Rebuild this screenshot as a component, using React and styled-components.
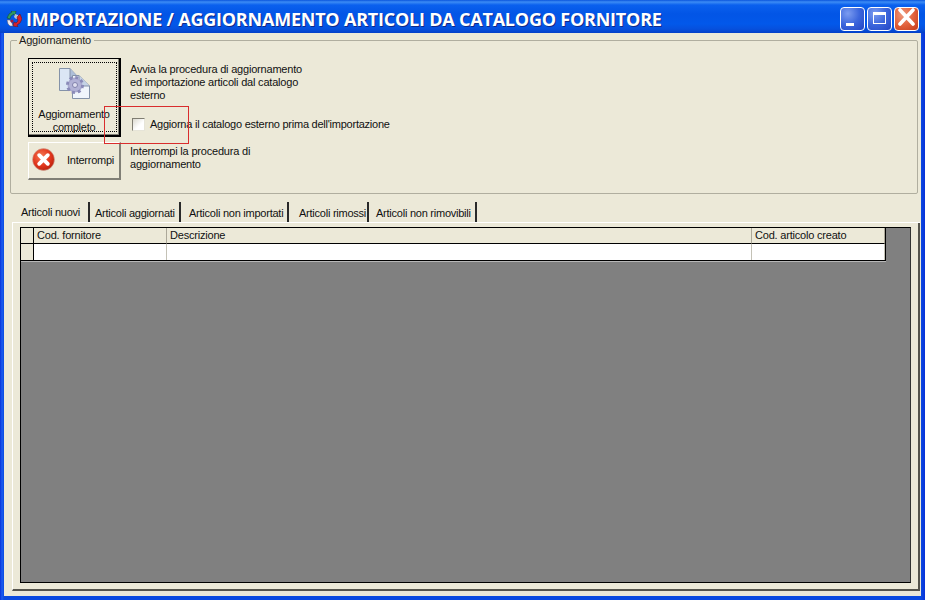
import React from "react";
import styled, { createGlobalStyle } from "styled-components";

const GlobalStyle = createGlobalStyle`
  html, body {
    margin: 0;
    padding: 0;
    background: #0a3ad6;
  }
  * {
    box-sizing: border-box;
  }
`;

const Win = styled.div`
  width: 925px;
  height: 600px;
  display: flex;
  flex-direction: column;
  overflow: hidden;
  background: linear-gradient(90deg, #0831d9 0, #1a5cf0 2px, #0a4ae0 4px, #0a4ae0 921px, #0831d9 100%);
  font-family: "Liberation Sans", Arial, sans-serif;
  font-size: 11px;
  letter-spacing: -0.2px;
  color: #111;
`;

const TitleBar = styled.div`
  height: 33px;
  flex: none;
  display: flex;
  align-items: center;
  padding: 0 6px 0 6px;
  background: linear-gradient(180deg, #0a55dc 0, #3c8cf5 2px, #0a60ee 5px, #0255e6 14px, #0258ea 24px, #0650dd 29px, #0340c8 33px);
`;

const Title = styled.div`
  flex: 1;
  margin-left: 4px;
  margin-top: 5px;
  color: #fff;
  font-family: "Open Sans", sans-serif;
  font-size: 18px;
  font-weight: 700;
  letter-spacing: -0.22px;
  white-space: nowrap;
  text-shadow: 1px 1px 0 #0f2a8a;
`;

const WinButton = styled.div`
  width: 25px;
  height: 24px;
  margin-left: 2px;
  margin-top: 5px;
  border: 1px solid #fff;
  border-radius: 4px;
  display: flex;
  background: ${(p) =>
    p.$close
      ? "radial-gradient(circle at 35% 30%, #ee9a7e 0, #e2623c 50%, #c3391a 100%)"
      : "radial-gradient(circle at 30% 25%, #7c9cf0 0, #3c66dc 50%, #2345c4 100%)"};
`;

const Client = styled.div`
  flex: 1;
  min-height: 0;
  margin: 0 4px 4px;
  padding: 1px 1px 5px 6px;
  background: #ece9d8;
  display: flex;
  flex-direction: column;
  position: relative;
`;

const Group = styled.fieldset`
  margin: 0 2px 0 0;
  padding: 0 0 0 17px;
  height: 160px;
  flex: none;
  border: 1px solid #b0ae9f;
  border-radius: 2px;
  display: flex;
  flex-direction: column;
`;

const Legend = styled.legend`
  margin-left: -11px;
  padding: 0 3px 0 2px;
  font-size: 11px;
  line-height: 13px;
  color: #1a1a1a;
`;

const ActionRow = styled.div`
  display: flex;
  margin-top: ${(p) => p.$top}px;
`;

const ActionButton = styled.div`
  width: 93px;
  height: ${(p) => p.$height}px;
  flex: none;
  background: #ece9d8;
  display: flex;
  align-items: center;
  position: relative;
  border-style: solid;
  border-width: 1px 2px 2px 1px;
  border-color: #fff #807f76 #807f76 #fff;
`;

const FocusButton = styled(ActionButton)`
  flex-direction: column;
  padding-top: 9px;
  border-color: #000;
  box-shadow: inset -1px -1px 0 #807f76;
`;

const FocusRing = styled.div`
  position: absolute;
  inset: 3px 2px 3px 3px;
  border: 1px dotted #000;
`;

const BigCaption = styled.div`
  text-align: center;
  line-height: 13px;
  margin-top: 8px;
  letter-spacing: -0.25px;
  white-space: nowrap;
`;

const StopSlot = styled.span`
  display: flex;
  margin: -3px 0 0 3px;
`;

const StopCaption = styled.span`
  margin: -1px 0 0 12px;
  letter-spacing: -0.25px;
`;

const Side = styled.div`
  margin-left: 9px;
  padding-top: ${(p) => p.$top}px;
  display: flex;
  flex-direction: column;
  line-height: 13px;
`;

const CheckRow = styled.label`
  display: flex;
  align-items: center;
  margin: 16px 0 0 2px;
  height: 13px;
  letter-spacing: -0.24px;
`;

const CheckBox = styled.span`
  width: 13px;
  height: 13px;
  margin-right: 5px;
  background: linear-gradient(135deg, #dcdad0, #fff 60%);
  border-style: solid;
  border-width: 1px;
  border-color: #7f7d72 #e6e4d8 #e6e4d8 #7f7d72;
`;

const RedFrame = styled.div`
  position: absolute;
  left: 100px;
  top: 73px;
  width: 85px;
  height: 38px;
  border: 1px solid #d92d2d;
`;

const Tabs = styled.div`
  margin: 8px 0 0 2px;
  padding-left: 3px;
  height: 21px;
  flex: none;
  display: flex;
  border-bottom: 1px solid #fff;
`;

const Tab = styled.div`
  width: ${(p) => p.$w}px;
  height: 20px;
  padding: ${(p) => (p.$active ? 4 : 5)}px 0 0 ${(p) => p.$pad}px;
  border-right: 2px solid #2a2a2a;
  white-space: nowrap;
  line-height: 13px;
  letter-spacing: -0.24px;
`;

const Pane = styled.div`
  flex: 1;
  min-height: 0;
  margin-left: 2px;
  padding: 4px 7px 6px 7px;
  border-right: 2px solid #55544c;
  border-bottom: 2px solid #55544c;
  border-left: 1px solid #fff;
  display: flex;
  flex-direction: column;
`;

const GridArea = styled.div`
  flex: 1;
  background: #808080;
  border: 1px solid #000;
  border-right-color: #333;
`;

const Table = styled.div`
  width: 865px;
  display: grid;
  grid-template-columns: 13px 133px 585px 133px;
  grid-template-rows: 16px 16px;
  background: #fff;
  border-right: 1px solid #000;
  border-bottom: 1px solid #000;
  box-shadow: 0 1px 0 #b8b8b8;
`;

const HeadCell = styled.div`
  background: #ece9d8;
  border-right: 1px solid #aca899;
  border-bottom: 1px solid #000;
  padding-left: 3px;
  line-height: 15px;
  white-space: nowrap;
`;

const Indicator = styled.div`
  background: #ece9d8;
  border-right: 1px solid #000;
  border-bottom: ${(p) => (p.$head ? "1px solid #000" : "none")};
`;

const BodyCell = styled.div`
  border-right: 1px solid #c4c2b6;
`;

const AppIcon = () => (
  <svg width="16" height="16" viewBox="0 0 16 16" style={{ marginTop: 4 }}>
    <path d="M1 7 L3 3 L6 1 L5 0 L10 0 L9 5 L8 3 L5 5 L4 8 Z" fill="#2f9a62" stroke="#14402c" strokeWidth="0.5" />
    <path d="M9 3 L12 4 L13 7 L10 8 L8 6 Z" fill="#b8c4d8" />
    <path d="M11 6 L14 3 L16 8 L14 12 L11 14 L12 16 L7 15 L8 11 L10 12 L12 10 Z" fill="#d8202c" stroke="#5c1018" strokeWidth="0.5" />
    <path d="M1 9 L4 9 L6 12 L7 15 L4 15 L2 13 Z" fill="#eeeaf2" stroke="#50506a" strokeWidth="0.5" />
    <circle cx="6" cy="10" r="1.6" fill="#a01d3c" />
  </svg>
);

const DocsIcon = () => (
  <svg width="31" height="32" viewBox="0 0 31 32" style={{ flex: "none" }}>
    <path d="M0.5 0.5 H11 L20 10 V22.5 H0.5 Z" fill="#dbe6f5" stroke="#8492a8" />
    <path d="M11 0.5 V10 H20" fill="#aebfd8" stroke="#8492a8" />
    <path d="M13.5 7.5 H20 L30.5 18 V30.5 H13.5 Z" fill="#f0f5fc" stroke="#8492a8" />
    <path d="M20 7.5 V18 H30.5" fill="#c4d2e6" stroke="#8492a8" />
    <circle cx="16" cy="17" r="7.5" fill="#a9a9cf" stroke="#8a8ab8" strokeWidth="3" strokeDasharray="3 2.9" />
    <circle cx="16" cy="17" r="6" fill="#b2b2d6" />
    <circle cx="16" cy="17" r="2.5" fill="#dfdff0" stroke="#8282ac" />
  </svg>
);

const StopIcon = () => (
  <svg width="23" height="23" viewBox="0 0 24 24">
    <defs>
      <radialGradient id="stop" cx="40%" cy="35%" r="70%">
        <stop offset="0" stopColor="#f47a55" />
        <stop offset="0.6" stopColor="#e2371d" />
        <stop offset="1" stopColor="#b81f0c" />
      </radialGradient>
    </defs>
    <circle cx="12" cy="12" r="11.4" fill="url(#stop)" stroke="#c9a898" strokeWidth="0.6" />
    <path d="M7.5 7.5 L16.5 16.5 M16.5 7.5 L7.5 16.5" stroke="#fff" strokeWidth="4" strokeLinecap="round" />
  </svg>
);

const tabs = [
  { label: "Articoli nuovi", w: 75, pad: 6, active: true },
  { label: "Articoli aggiornati", w: 91, pad: 5 },
  { label: "Articoli non importati", w: 108, pad: 8 },
  { label: "Articoli rimossi", w: 80, pad: 10 },
  { label: "Articoli non rimovibili", w: 108, pad: 7 },
];

export default function App() {
  return (
    <Win>
      <GlobalStyle />
      <TitleBar>
        <AppIcon />
        <Title>IMPORTAZIONE / AGGIORNAMENTO ARTICOLI DA CATALOGO FORNITORE</Title>
        <WinButton>
          <svg width="23" height="22" viewBox="0 0 23 22">
            <rect x="5" y="15" width="8" height="3" fill="#fff" />
          </svg>
        </WinButton>
        <WinButton>
          <svg width="23" height="22" viewBox="0 0 23 22">
            <path d="M5 4 H18 V16 H5 Z M6 7 V15 H17 V7 Z" fill="#fff" fillRule="evenodd" />
          </svg>
        </WinButton>
        <WinButton $close>
          <svg width="23" height="22" viewBox="0 0 23 22">
            <path d="M5 2 L18 16 M18 2 L5 16" stroke="#fff" strokeWidth="3.6" strokeLinecap="round" />
          </svg>
        </WinButton>
      </TitleBar>
      <Client>
        <Group>
          <Legend>Aggiornamento</Legend>
          <ActionRow $top={11}>
            <FocusButton $height={79}>
              <FocusRing />
              <DocsIcon />
              <BigCaption>
                Aggiornamento
                <br />
                completo
              </BigCaption>
            </FocusButton>
            <Side $top={5}>
              <span>Avvia la procedura di aggiornamento</span>
              <span>ed importazione articoli dal catalogo</span>
              <span>esterno</span>
              <CheckRow>
                <CheckBox />
                Aggiorna il catalogo esterno prima dell'importazione
              </CheckRow>
            </Side>
          </ActionRow>
          <ActionRow $top={5}>
            <ActionButton $height={38}>
              <StopSlot>
                <StopIcon />
              </StopSlot>
              <StopCaption>Interrompi</StopCaption>
            </ActionButton>
            <Side $top={3}>
              <span>Interrompi la procedura di</span>
              <span>aggiornamento</span>
            </Side>
          </ActionRow>
        </Group>
        <RedFrame />
        <Tabs>
          {tabs.map((t) => (
            <Tab key={t.label} $w={t.w} $pad={t.pad} $active={t.active}>
              {t.label}
            </Tab>
          ))}
        </Tabs>
        <Pane>
          <GridArea>
            <Table>
              <Indicator $head />
              <HeadCell>Cod. fornitore</HeadCell>
              <HeadCell>Descrizione</HeadCell>
              <HeadCell>Cod. articolo creato</HeadCell>
              <Indicator />
              <BodyCell />
              <BodyCell />
              <BodyCell />
            </Table>
          </GridArea>
        </Pane>
      </Client>
    </Win>
  );
}
